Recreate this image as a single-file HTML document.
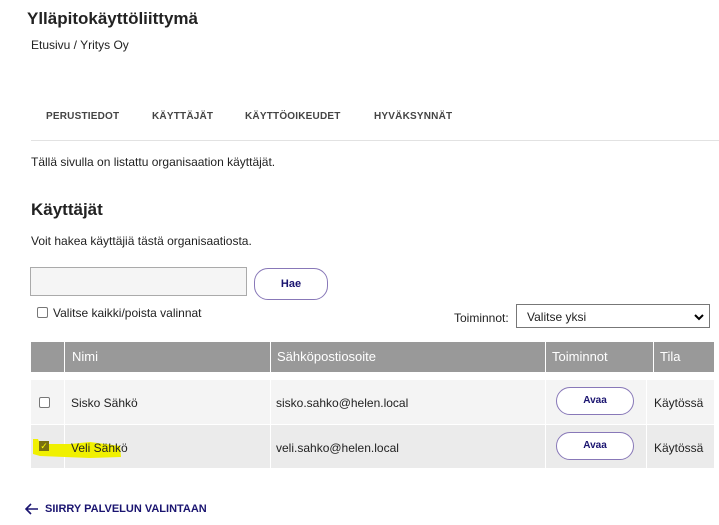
<!DOCTYPE html>
<html><head><meta charset="utf-8"><style>
body{margin:0;width:719px;height:525px;background:#fff;font-family:"Liberation Sans",Arial,sans-serif;color:#222;position:relative;overflow:hidden}
.a{position:absolute;white-space:nowrap}
.cb{position:absolute;width:9px;height:9px;border:1px solid #777;border-radius:2px;background:#fff}
.btn{position:absolute;border:1px solid #8878b8;border-radius:14px;background:#fff;color:#1a1470;font-weight:bold;font-size:11px;text-align:center}
.td{position:absolute;font-size:12px}
.tab{position:absolute;font-size:10px;font-weight:bold;color:#444;letter-spacing:0.2px;white-space:nowrap}
</style></head><body>
<div class="a" style="left:27px;top:9px;font-size:17px;font-weight:bold">Ylläpitokäyttöliittymä</div>
<div class="a" style="left:31px;top:38px;font-size:12px">Etusivu / Yritys Oy</div>
<div class="tab" style="left:46px;top:111px">PERUSTIEDOT</div>
<div class="tab" style="left:152px;top:111px">KÄYTTÄJÄT</div>
<div class="tab" style="left:245px;top:111px">KÄYTTÖOIKEUDET</div>
<div class="tab" style="left:374px;top:111px">HYVÄKSYNNÄT</div>
<div class="a" style="left:31px;top:140px;width:688px;height:1px;background:#e2e2e2"></div>
<div class="a" style="left:31px;top:155px;font-size:12px">Tällä sivulla on listattu organisaation käyttäjät.</div>
<div class="a" style="left:31px;top:200px;font-size:17px;font-weight:bold">Käyttäjät</div>
<div class="a" style="left:31px;top:234px;font-size:12px">Voit hakea käyttäjiä tästä organisaatiosta.</div>
<div class="a" style="left:30px;top:267px;width:215px;height:27px;border:1px solid #aaa;background:#f5f5f5"></div>
<div class="btn" style="left:254px;top:268px;width:72px;height:30px;line-height:30px">Hae</div>
<div class="cb" style="left:37px;top:307px"></div>
<div class="a" style="left:53px;top:306px;font-size:12px">Valitse kaikki/poista valinnat</div>
<div class="a" style="left:454px;top:311px;font-size:12px">Toiminnot:</div>
<div class="a" style="left:516px;top:304px;height:24px;border:1px solid #777;background:#fff;font-size:12px;line-height:24px;padding-left:10px;box-sizing:border-box;width:194px">Valitse yksi<svg style="position:absolute;right:5px;top:8px" width="10" height="8" viewBox="0 0 10 8"><path d="M1 2 L5 6 L9 2" stroke="#000" stroke-width="2" fill="none"/></svg></div>
<div class="a" style="left:31px;top:342px;width:683px;height:30px;background:#999"></div>
<div class="a" style="left:64px;top:342px;width:1px;height:30px;background:#fff"></div>
<div class="a" style="left:270px;top:342px;width:1px;height:30px;background:#fff"></div>
<div class="a" style="left:545px;top:342px;width:1px;height:30px;background:#fff"></div>
<div class="a" style="left:653px;top:342px;width:1px;height:30px;background:#fff"></div>
<div class="a" style="left:72px;top:349px;font-size:13px;color:#fff">Nimi</div>
<div class="a" style="left:277px;top:349px;font-size:13px;color:#fff">Sähköpostiosoite</div>
<div class="a" style="left:552px;top:349px;font-size:13px;color:#fff">Toiminnot</div>
<div class="a" style="left:660px;top:349px;font-size:13px;color:#fff">Tila</div>
<div class="a" style="left:31px;top:380px;width:683px;height:44px;background:#f4f4f4"></div>
<div class="a" style="left:31px;top:425px;width:683px;height:43px;background:#ebebeb"></div>
<div class="a" style="left:64px;top:380px;width:1px;height:88px;background:#fff"></div>
<div class="a" style="left:270px;top:380px;width:1px;height:88px;background:#fff"></div>
<div class="a" style="left:545px;top:380px;width:1px;height:88px;background:#fff"></div>
<div class="a" style="left:646px;top:380px;width:1px;height:88px;background:#fff"></div>
<div class="cb" style="left:39px;top:397px"></div>
<div class="td" style="left:71px;top:396px">Sisko Sähkö</div>
<div class="td" style="left:276px;top:396px">sisko.sahko@helen.local</div>
<div class="btn" style="left:556px;top:387px;width:76px;height:26px;line-height:26px;font-size:10px">Avaa</div>
<div class="td" style="left:654px;top:396px">Käytössä</div>
<svg class="a" style="left:30px;top:436px" width="95" height="25" viewBox="0 0 95 25"><path d="M3 3 L8 3 L10 8 L40 8 L60 6 L90 10 L91 21 L60 22 L10 20 L3 18 Z" fill="#f0f000"/></svg>
<div class="a" style="left:39px;top:441px;width:10px;height:10px;background:#7a7010;color:#ff0;font-size:9px;line-height:10px;text-align:center">✓</div>
<div class="td" style="left:71px;top:441px">Veli Sähkö</div>
<div class="td" style="left:276px;top:441px">veli.sahko@helen.local</div>
<div class="btn" style="left:556px;top:432px;width:76px;height:26px;line-height:26px;font-size:10px">Avaa</div>
<div class="td" style="left:654px;top:441px">Käytössä</div>
<svg class="a" style="left:25px;top:503px" width="14" height="12" viewBox="0 0 14 12"><path d="M13 6 H2 M6 1 L1 6 L6 11" stroke="#1a1470" stroke-width="1.6" fill="none"/></svg>
<div class="a" style="left:45px;top:503px;font-size:11px;font-weight:bold;color:#1a1470">SIIRRY PALVELUN VALINTAAN</div>
</body></html>
